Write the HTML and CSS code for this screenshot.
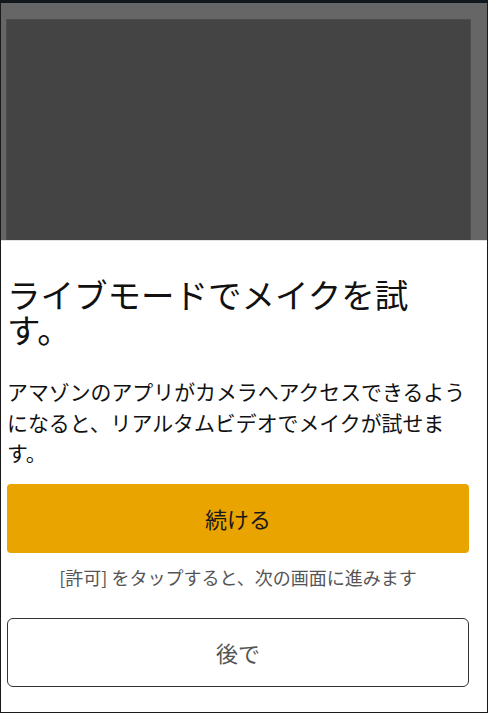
FILE: index.html
```html
<!DOCTYPE html>
<html lang="ja">
<head>
<meta charset="utf-8">
<link rel="stylesheet" href="styles.css">
</head>
<body>
<div class="frame">
  <div class="preview">
    <div class="preview-inner"></div>
  </div>
  <div class="content">
    <h1 class="title">ライブモードでメイクを試す。</h1>
    <p class="desc">アマゾンのアプリがカメラへアクセスできるようになると、リアルタムビデオでメイクが試せます。</p>
    <button class="btn btn-primary">続ける</button>
    <p class="note">[許可] をタップすると、次の画面に進みます</p>
    <button class="btn btn-secondary">後で</button>
  </div>
</div>
</body>
</html>
```

FILE: styles.css
```css
html, body {
  margin: 0;
  padding: 0;
  background: #ffffff;
}
body {
  font-family: "Noto Sans CJK JP", "Noto Sans", sans-serif;
}
.frame {
  box-sizing: border-box;
  width: 488px;
  height: 713px;
  border-left: 1px solid #1a1a1a;
  border-right: 1px solid #1a1a1a;
  border-bottom: 1px solid #1a1a1a;
  border-top: 3px solid #12191e;
  display: flex;
  flex-direction: column;
  overflow: hidden;
}
.preview {
  height: 238px;
  background: #666666;
  padding: 16px 16px 0 5px;
  box-sizing: border-box;
  display: flex;
  border-bottom: 1px solid #e2e2e2;
}
.preview-inner {
  flex: 1;
  background: #444444;
  border: 1px solid #4d4d4d;
  border-bottom: none;
}
.content {
  padding: 0 18px 0 6px;
  display: flex;
  flex-direction: column;
}
.title {
  margin: 35px 0 0 0;
  padding-right: 20px;
  font-size: 33.5px;
  line-height: 35px;
  font-weight: 400;
  color: #111111;
}
.desc {
  margin: 30px 0 0 0;
  font-size: 20.9px;
  line-height: 30.5px;
  color: #111111;
}
.btn {
  font-family: "Noto Sans CJK JP", "Noto Sans", sans-serif;
  height: 69px;
  width: 100%;
  font-size: 22px;
  box-sizing: border-box;
  padding: 0;
  cursor: pointer;
}
.btn-primary {
  margin-top: 16px;
  background: #e9a400;
  border: none;
  border-radius: 4px;
  color: #1a1a1a;
}
.note {
  margin: 12px 0 0 0;
  font-size: 18px;
  line-height: 24px;
  text-align: center;
  color: #555555;
}
.btn-secondary {
  margin-top: 29px;
  background: #ffffff;
  border: 1px solid #333333;
  border-radius: 6px;
  color: #555555;
}
```
